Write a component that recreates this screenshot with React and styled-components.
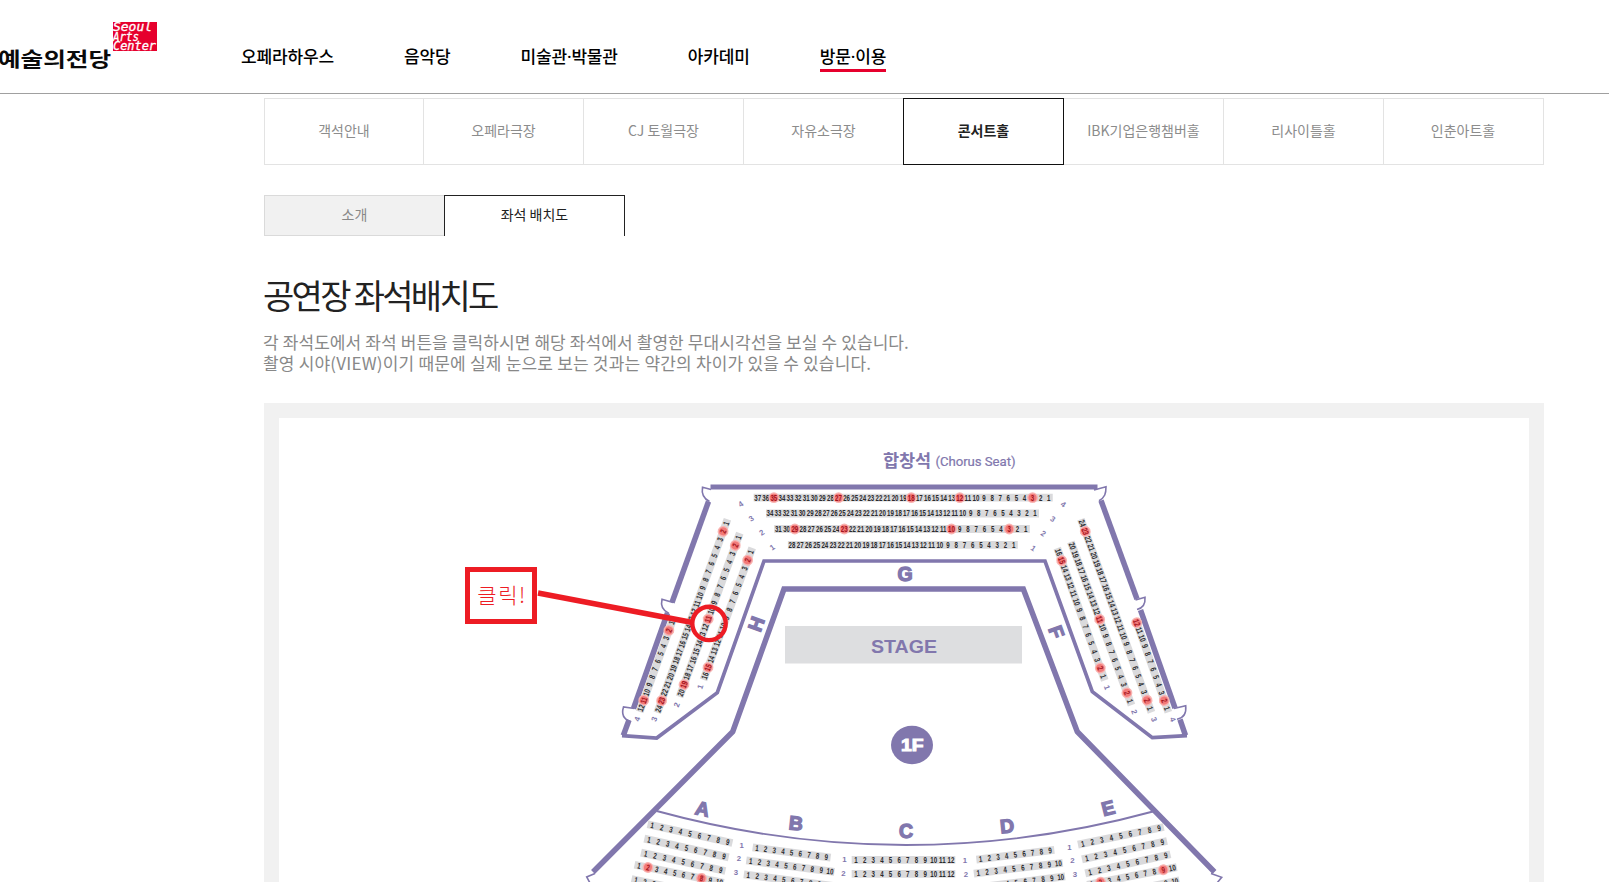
import styled, { createGlobalStyle } from "styled-components";

const GlobalStyle = createGlobalStyle`
  *, *::before, *::after {
    box-sizing: border-box;
    margin: 0;
    padding: 0;
  }

  body {
    background: #fff;
    color: #222;
    font-family: "Noto Sans CJK KR", sans-serif;
    overflow: hidden;
  }

  a {
    color: inherit;
    text-decoration: none;
  }
`;

const PURPLE = "#8177ad";
const RED = "#ed1c24";

const Page = styled.div`
  height: 882px;
  overflow: hidden;
`;

const Header = styled.header`
  display: flex;
  align-items: flex-start;
  height: 94px;
  border-bottom: 1px solid #a0a0a0;
`;

const Logo = styled.svg`
  display: block;
  width: 165px;
  height: 80px;
`;

const Nav = styled.nav`
  display: flex;
  gap: 70px;
  margin: 42px 0 0 76px;
`;

const NavLink = styled.a`
  height: 30px;
  line-height: 29px;
  font-family: "Noto Sans", "Noto Sans CJK KR", sans-serif;
  font-size: 17px;
  font-weight: 500;
  letter-spacing: -0.15px;
  color: #000;
  white-space: nowrap;
  border-bottom: 3px solid ${({ $active }) => ($active ? "#e6002d" : "transparent")};
`;

const Content = styled.main`
  width: 1280px;
  margin: 4px 0 0 264px;
`;

const HallTabs = styled.ul`
  display: grid;
  grid-template-columns: 159px repeat(6, 160px) 159px;
  height: 67px;
  list-style: none;
  border: 1px solid #e3e3e3;
`;

const HallTab = styled.li`
  display: flex;
  align-items: center;
  justify-content: center;
  position: relative;
  z-index: ${({ $active }) => ($active ? 1 : 0)};
  margin: -1px 0 -1px -1px;
  padding-bottom: 4px;
  font-size: 14px;
  font-weight: ${({ $active }) => ($active ? 700 : 400)};
  color: ${({ $active }) => ($active ? "#222" : "#8c8c8c")};
  border: 1px solid ${({ $active }) => ($active ? "#111" : "#e3e3e3")};
  border-right-color: ${({ $active }) => ($active ? "#111" : "transparent")};
`;

const SubTabs = styled.div`
  display: flex;
  height: 41px;
  margin-top: 30px;
`;

const SubTab = styled.button`
  width: ${({ $active }) => ($active ? "181px" : "180px")};
  padding-bottom: 4px;
  font: 400 14px "Noto Sans CJK KR", sans-serif;
  color: ${({ $active }) => ($active ? "#222" : "#888")};
  background: ${({ $active }) => ($active ? "#fff" : "#f1f1f1")};
  border: 1px solid ${({ $active }) => ($active ? "#222" : "#dadada")};
  ${({ $active }) => ($active ? "border-bottom: 0;" : "border-right: 0;")}
`;

const Title = styled.h2`
  height: 50px;
  margin: 34px 0 0 -1px;
  line-height: 50px;
  font-size: 34px;
  font-weight: 400;
  letter-spacing: -2.7px;
  color: #222;
`;

const Description = styled.div`
  height: 42px;
  margin: 11px 0 0 -1px;
  line-height: 21px;
  font-size: 17px;
  color: #888;
  white-space: nowrap;
`;

const DescriptionLine = styled.p`
  letter-spacing: ${({ $spacing }) => $spacing};
`;

const MapPanel = styled.section`
  height: 500px;
  margin-top: 30px;
  padding: 15px;
  background: #f1f1f1;
`;

const MapCanvas = styled.div`
  position: relative;
  height: 485px;
  background: #fff;
`;

const MapSvg = styled.svg`
  display: block;
  width: 1250px;
  height: 464px;
`;

const Callout = styled.div`
  position: absolute;
  left: 186px;
  top: 149px;
  width: 72px;
  height: 57px;
  padding-left: 2px;
  border: 5px solid ${RED};
  color: ${RED};
  font-size: 21px;
  font-weight: 300;
  letter-spacing: 1.5px;
  line-height: 44px;
  text-align: center;
  white-space: nowrap;
`;

const NAV_ITEMS = ["오페라하우스", "음악당", "미술관·박물관", "아카데미", "방문·이용"];

const HALLS = [
  "객석안내",
  "오페라극장",
  "CJ 토월극장",
  "자유소극장",
  "콘서트홀",
  "IBK기업은행챔버홀",
  "리사이틀홀",
  "인춘아트홀",
];

// from / to: seat numbers at both ends, a / b: centres of those seats
const SEAT_ROWS = [
  // G
  { from: 37, to: 1, a: [757.7, 497.7], b: [1048.7, 497.7], view: [35, 27, 18, 12, 3] },
  { from: 34, to: 1, a: [770, 513.5], b: [1035, 513.5] },
  { from: 31, to: 1, a: [778.3, 529], b: [1025.7, 529], view: [29, 23, 10, 3] },
  { from: 28, to: 1, a: [792, 544.8], b: [1013.7, 544.8] },
  // H
  { from: 1, to: 24, a: [726, 523.3], b: [658.7, 708.7], rotate: -70, view: [2, 23] },
  { from: 1, to: 20, a: [738.3, 537.3], b: [681, 692.7], rotate: -70, view: [2, 11, 19] },
  { from: 1, to: 16, a: [750.7, 552], b: [705, 675.7], rotate: -70, view: [2, 15] },
  { from: 1, to: 12, a: [671.7, 622.7], b: [641, 708], rotate: -70, view: [2, 11] },
  // F
  { from: 16, to: 1, a: [1058.7, 552.3], b: [1103.3, 676.3], rotate: 70, view: [15, 2] },
  { from: 20, to: 1, a: [1072.3, 546], b: [1130, 701], rotate: 70, view: [11, 2] },
  { from: 24, to: 1, a: [1082.3, 523.3], b: [1150, 708.3], rotate: 70, view: [23, 2] },
  { from: 12, to: 1, a: [1136.7, 622.7], b: [1167, 708.3], rotate: 70, view: [12, 2] },
  // A
  { from: 1, to: 9, a: [652.3, 825.3], b: [727.7, 842], rotate: 12 },
  { from: 1, to: 9, a: [649, 839.7], b: [724, 856.3], rotate: 12 },
  { from: 1, to: 9, a: [645.7, 853.7], b: [720.7, 870], rotate: 12 },
  { from: 1, to: 10, a: [639, 865.7], b: [719.3, 882], rotate: 12, view: [2, 8] },
  { from: 1, to: 10, a: [636, 880], b: [716, 897], rotate: 12 },
  // B
  { from: 1, to: 9, a: [757, 848], b: [826.3, 857], rotate: 7 },
  { from: 1, to: 10, a: [750.7, 861], b: [830, 871.3], rotate: 7 },
  { from: 1, to: 10, a: [748.3, 875], b: [828.3, 885.3], rotate: 7 },
  // C
  { from: 1, to: 12, a: [856, 859.8], b: [951, 859.8] },
  { from: 1, to: 12, a: [856, 873.8], b: [951, 873.8] },
  // D
  { from: 1, to: 9, a: [980.7, 859], b: [1050, 850.5], rotate: -7 },
  { from: 1, to: 10, a: [978.3, 873], b: [1058.3, 863.3], rotate: -7 },
  { from: 1, to: 10, a: [981, 887], b: [1060.7, 877], rotate: -7 },
  // E
  { from: 1, to: 9, a: [1082.7, 843.7], b: [1159, 828], rotate: -12 },
  { from: 1, to: 9, a: [1086.7, 858.3], b: [1162.3, 842], rotate: -12 },
  { from: 1, to: 9, a: [1090, 872.3], b: [1165.7, 855.3], rotate: -12 },
  { from: 1, to: 10, a: [1091.7, 884], b: [1172.3, 868], rotate: -12, view: [2, 9] },
  { from: 1, to: 10, a: [1095, 898], b: [1175, 881.3], rotate: -12 },
];

// [row number, x, y, rotation]
const ROW_LABELS = [
  [4, 740.7, 504, -35], [3, 751.3, 518.7, -35], [2, 761.7, 532.7, -35], [1, 772.3, 547.3, -35],
  [4, 1063.3, 504.3, 35], [3, 1052.7, 519, 35], [2, 1043.3, 533.7, 35], [1, 1033.3, 548.3, 35],
  [4, 637.3, 719, -70], [3, 654.3, 719, -70], [2, 676.7, 704.7, -70], [1, 700.3, 686.7, -70],
  [1, 1107, 687.3, 70], [2, 1134.3, 712, 70], [3, 1154, 719.3, 70], [4, 1172.7, 719.3, 70],
  [1, 741.7, 845.3, 0], [2, 739, 858.7, 0], [3, 736, 872.7, 0],
  [1, 844.3, 859.3, 0], [2, 843.3, 873.7, 0],
  [1, 965, 860.7, 0], [2, 966, 874.3, 0],
  [1, 1069.3, 847.3, 0], [2, 1072.3, 860.7, 0], [3, 1075, 874.7, 0],
];

const BLOCKS = [
  ["G", 905, 574, 0],
  ["H", 756, 624, -70],
  ["F", 1056.5, 632, 70],
  ["A", 702.7, 808.5, 12],
  ["B", 796, 823, 6],
  ["C", 906, 830.7, 0],
  ["D", 1007, 825.7, -6],
  ["E", 1108, 808, -14],
];

function SeatRow({ from, to, a, b, rotate = 0, view = [] }) {
  const count = Math.abs(from - to);
  const dx = (b[0] - a[0]) / count;
  const dy = (b[1] - a[1]) / count;
  const step = from < to ? 1 : -1;
  const seats = Array.from({ length: count + 1 }, (_, i) => ({
    no: from + step * i,
    x: a[0] + dx * i,
    y: a[1] + dy * i,
  }));

  return (
    <g>
      <line
        x1={a[0] - dx / 2}
        y1={a[1] - dy / 2}
        x2={b[0] + dx / 2}
        y2={b[1] + dy / 2}
        stroke="#dadadc"
        strokeWidth="7.8"
      />
      {seats.map(({ no, x, y }) => {
        const hasView = view.includes(no);
        return (
          <g key={no} transform={`translate(${x} ${y}) rotate(${rotate})`}>
            {hasView && <circle r="5.4" fill="#f8b3b1" />}
            {hasView && <circle r="4" fill="#f27a79" />}
            <text
              transform="scale(0.74 1)"
              y="2.9"
              fontSize="8.3"
              fontWeight="700"
              textAnchor="middle"
              fill={hasView ? "#a3121c" : "#2b2b2e"}
            >
              {no}
            </text>
          </g>
        );
      })}
    </g>
  );
}

function Walls() {
  return (
    <g fill="none" stroke={PURPLE} strokeWidth="5.5">
      {/* chorus seats, outer side */}
      <path d="M710.5 487H1097.5" strokeWidth="5" />
      <path d="M708.5 501.5L672 602.5" />
      <path d="M667.5 613L633.5 708.5" />
      <path d="M629 720L623.3 735.5" />
      <path d="M1101 500.5L1137 599" />
      <path d="M1140.5 610L1175 708" />
      <path d="M1180 719.5L1185.5 735.5" />
      {/* chorus seats, inner side */}
      <path
        d="M622 735.7L656.7 738L717.3 692.7L764 561H1045L1092.3 691.7L1152.3 737.7L1187 735.7"
        strokeWidth="3.7"
      />
      {/* doors */}
      <g strokeWidth="1.6">
        <path d="M711 489.5L702.5 487.3C701.5 493 703.5 498.5 709.5 501.5" />
        <path d="M673 602.5L662 599.3C660.5 605.5 662.5 610.5 669 613.5" />
        <path d="M634.5 708.5L623.5 707C621.5 713.5 623 719 630.5 721.5" />
        <path d="M1094 490L1106 486.7C1106 493.5 1105 497.5 1099 500.7" />
        <path d="M1135.5 600L1145 597.3C1145.5 603.5 1143.5 608 1137 609.5" />
        <path d="M1174 708.5L1185.7 705.7C1186.5 713 1184.5 718 1177 719.3" />
        <path d="M595 873.5L586.7 877L590 883" />
        <path d="M1211 873.5L1221.7 877.3L1217 883" />
      </g>
      {/* first floor */}
      <path d="M593 872L732.7 731.7L784 589H1023.3L1077.3 731.7L1214.5 872" />
      <path d="M656.7 811Q906 879 1155 811" strokeWidth="1.9" />
    </g>
  );
}

function SeatMap() {
  return (
    <MapSvg viewBox="279 418 1250 464" fontFamily='"Liberation Sans", Arial, sans-serif'>
      <g fill={PURPLE}>
        <text
          x="883"
          y="467.3"
          fontFamily='"Noto Sans CJK KR", sans-serif'
          fontSize="17.5"
          fontWeight="700"
          textLength="48"
        >
          합창석
        </text>
        <text
          x="935.5"
          y="465.5"
          fontFamily="Roboto, sans-serif"
          fontSize="13.2"
          fontWeight="400"
          stroke={PURPLE}
          strokeWidth="0.2"
          textLength="80"
        >
          (Chorus Seat)
        </text>
      </g>

      <Walls />
      {SEAT_ROWS.map((row, i) => (
        <SeatRow key={i} {...row} />
      ))}

      <g fill={PURPLE} fontWeight="700" textAnchor="middle">
        {ROW_LABELS.map(([no, x, y, angle], i) => (
          <text key={i} transform={`translate(${x} ${y}) rotate(${angle})`} y="2.6" fontSize="7.8">
            {no}
          </text>
        ))}
        {BLOCKS.map(([name, x, y, angle]) => (
          <text
            key={name}
            transform={`translate(${x} ${y}) rotate(${angle})`}
            y="7"
            fontSize="19.5"
            stroke={PURPLE}
            strokeWidth="1.3"
          >
            {name}
          </text>
        ))}
      </g>

      <rect x="785" y="626" width="237" height="37.5" fill="#dddee0" />
      <text
        x="871"
        y="653"
        fontSize="19"
        fontWeight="700"
        fill={PURPLE}
        textLength="66"
        lengthAdjust="spacingAndGlyphs"
      >
        STAGE
      </text>

      <ellipse cx="912" cy="745" rx="21" ry="19.2" fill={PURPLE} />
      <text
        x="901"
        y="751"
        fontSize="16.5"
        fontWeight="700"
        fill="#fff"
        stroke="#fff"
        strokeWidth="1"
        textLength="22.5"
        lengthAdjust="spacingAndGlyphs"
      >
        1F
      </text>

      <g fill="none" stroke={RED} strokeWidth="5.4">
        <path d="M538 593L692.5 622.5" />
        <circle cx="709" cy="623.4" r="16.7" strokeWidth="4.4" />
      </g>
    </MapSvg>
  );
}

function SiteLogo() {
  return (
    <Logo viewBox="0 0 165 80">
      <text
        x="-2"
        y="67"
        fontSize="20"
        fontWeight="700"
        fill="#0a0a0a"
        textLength="113"
        lengthAdjust="spacingAndGlyphs"
        fontFamily='"Noto Sans CJK KR", sans-serif'
      >
        예술의전당
      </text>
      <rect x="113" y="22" width="44" height="29" fill="#e6002d" />
      <g
        fill="#fff"
        stroke="#fff"
        strokeWidth="0.3"
        fontFamily='"DejaVu Sans Mono", monospace'
        fontSize="11.5"
        fontStyle="italic"
      >
        <text x="113" y="31.2" textLength="39" lengthAdjust="spacingAndGlyphs">Seoul</text>
        <text x="113" y="40.8" textLength="26" lengthAdjust="spacingAndGlyphs">Arts</text>
        <text x="113" y="50.4" textLength="43" lengthAdjust="spacingAndGlyphs">Center</text>
      </g>
    </Logo>
  );
}

function App() {
  return (
    <>
      <GlobalStyle />
      <Page>
        <Header>
          <SiteLogo />
          <Nav>
            {NAV_ITEMS.map((item) => (
              <NavLink key={item} href="#" $active={item === "방문·이용"}>
                {item}
              </NavLink>
            ))}
          </Nav>
        </Header>

        <Content>
          <HallTabs>
            {HALLS.map((hall) => (
              <HallTab key={hall} $active={hall === "콘서트홀"}>
                {hall}
              </HallTab>
            ))}
          </HallTabs>

          <SubTabs>
            <SubTab>소개</SubTab>
            <SubTab $active>좌석 배치도</SubTab>
          </SubTabs>

          <Title>공연장 좌석배치도</Title>
          <Description>
            <DescriptionLine $spacing="0.1px">
              각 좌석도에서 좌석 버튼을 클릭하시면 해당 좌석에서 촬영한 무대시각선을 보실 수 있습니다.
            </DescriptionLine>
            <DescriptionLine $spacing="0.2px">
              촬영 시야(VIEW)이기 때문에 실제 눈으로 보는 것과는 약간의 차이가 있을 수 있습니다.
            </DescriptionLine>
          </Description>

          <MapPanel>
            <MapCanvas>
              <SeatMap />
              <Callout>클릭!</Callout>
            </MapCanvas>
          </MapPanel>
        </Content>
      </Page>
    </>
  );
}

export default App;
